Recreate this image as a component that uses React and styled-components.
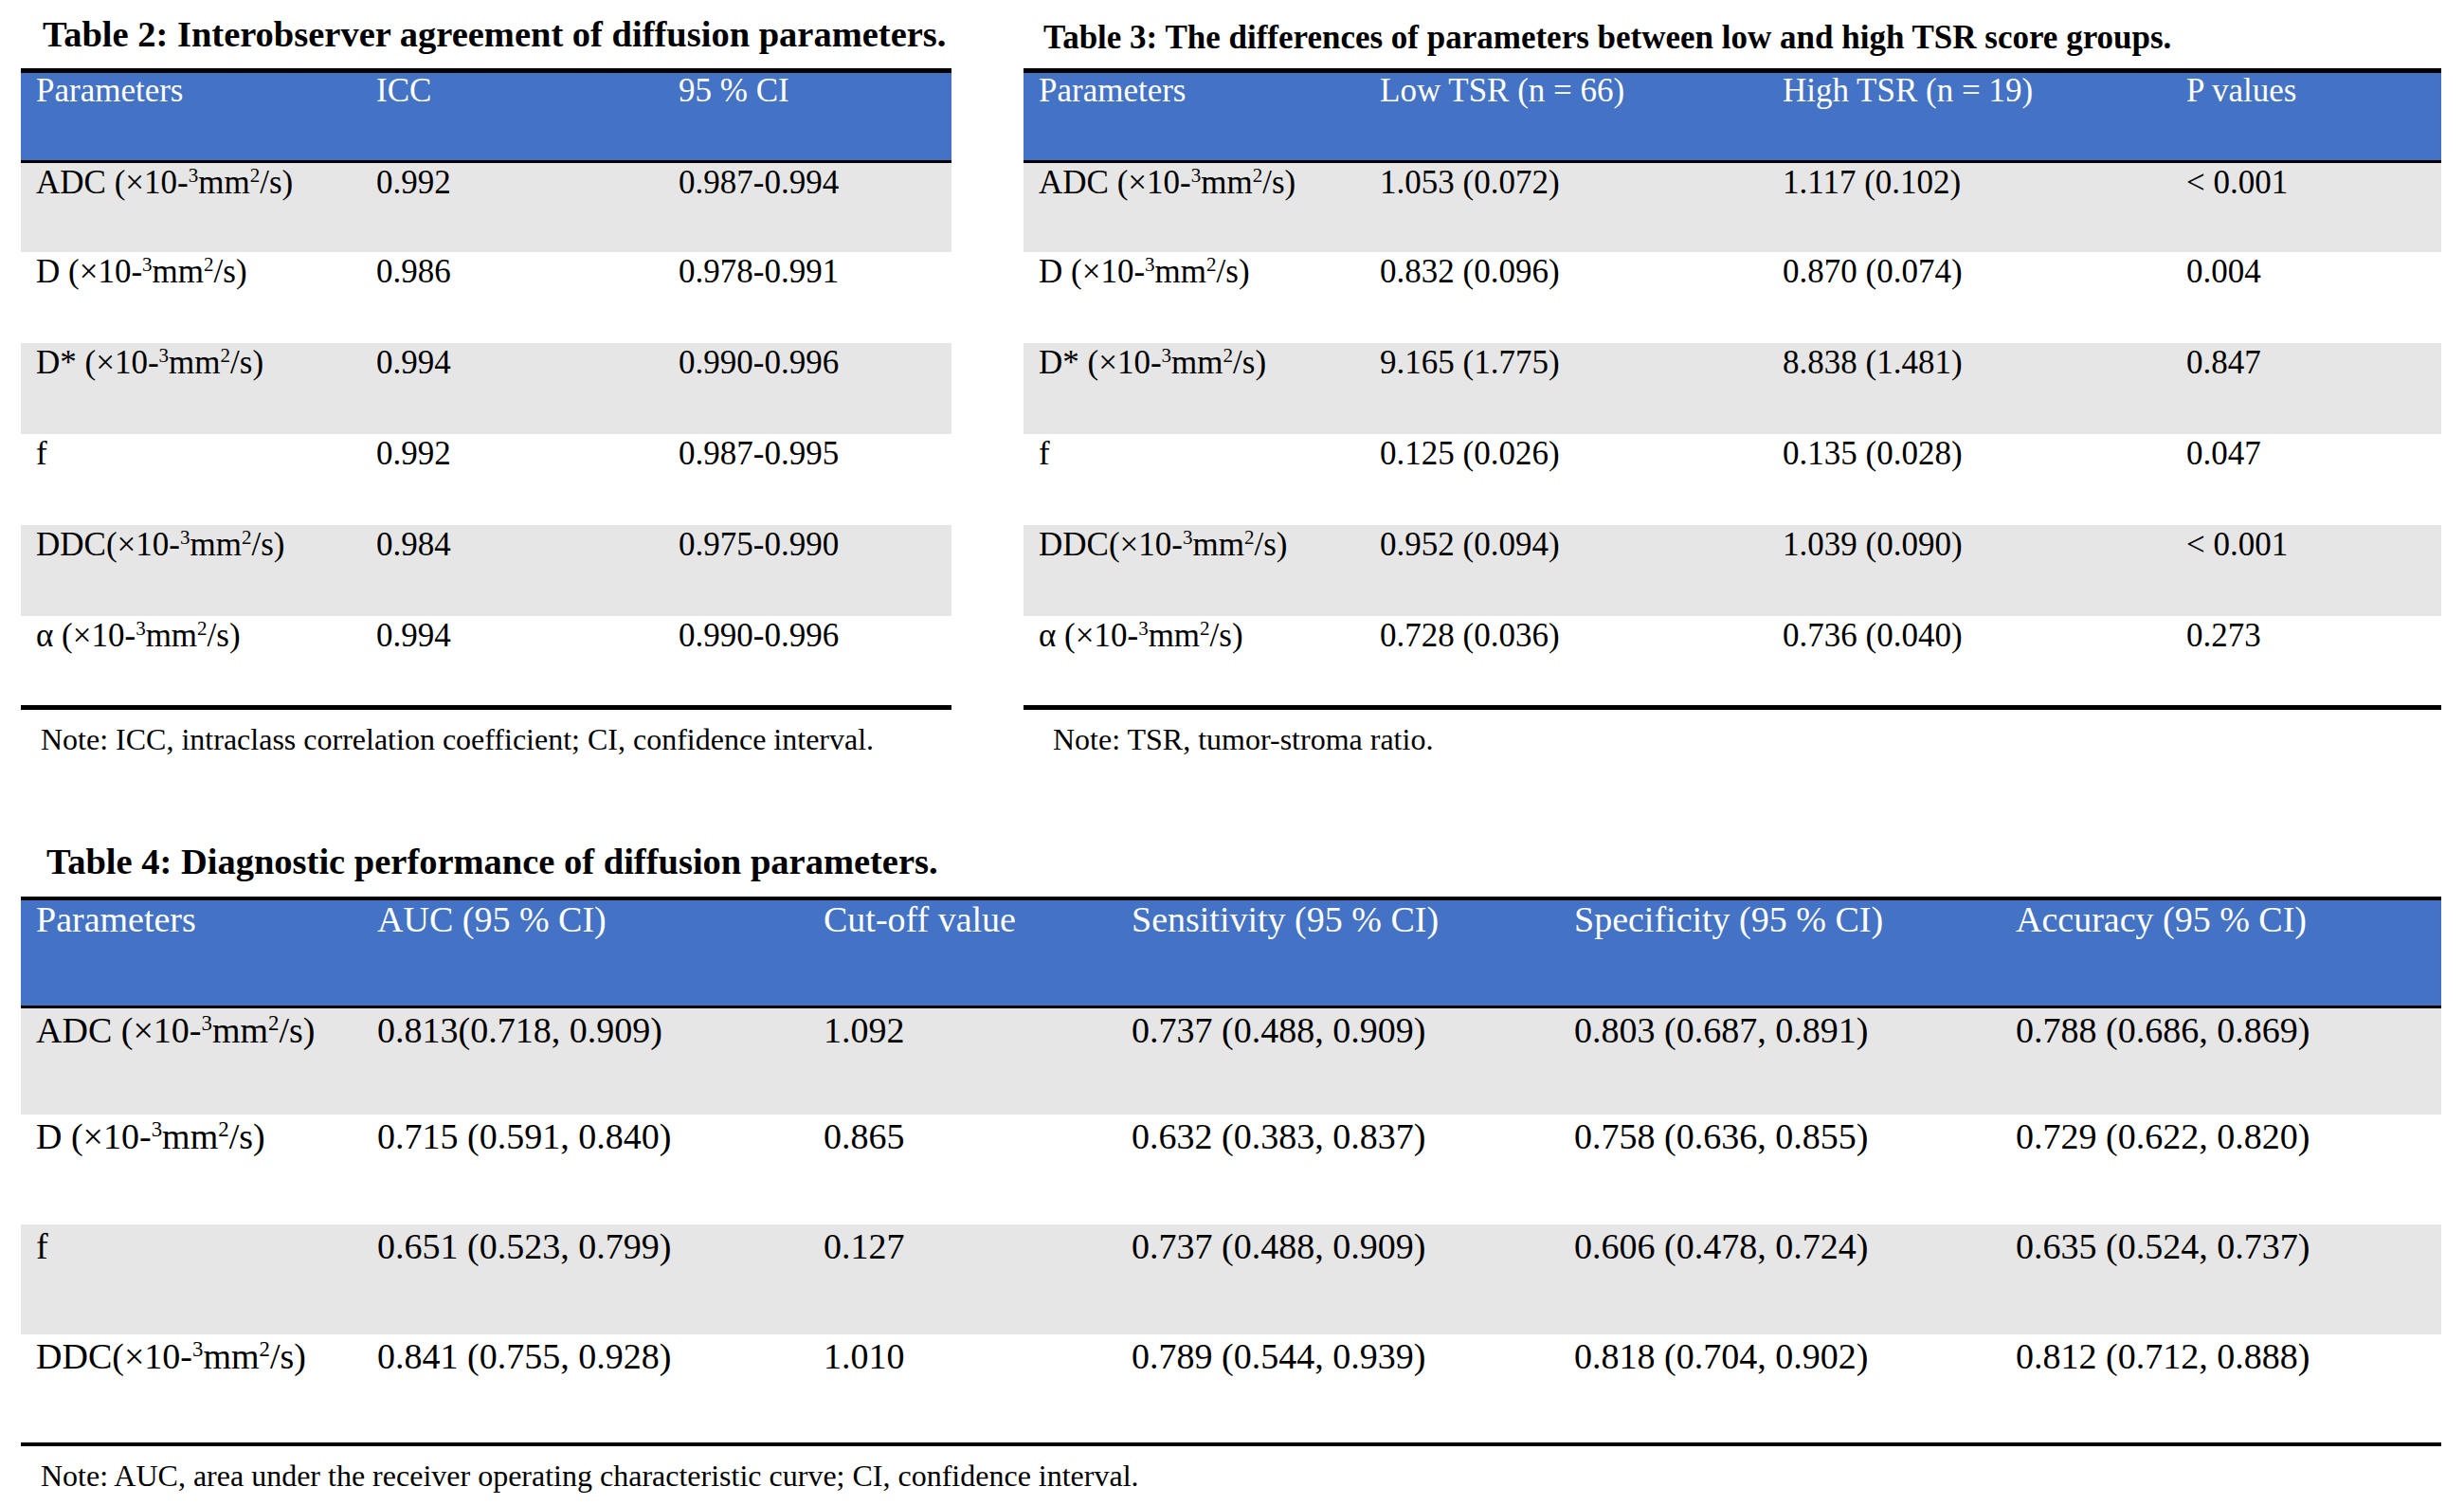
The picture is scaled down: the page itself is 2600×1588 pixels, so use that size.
import React from 'react';
import styled, { createGlobalStyle } from 'styled-components';

const GlobalStyle = createGlobalStyle`
  html, body {
    margin: 0;
    padding: 0;
    background: #ffffff;
  }
  body {
    font-family: "Liberation Serif", "Times New Roman", serif;
    color: #000000;
  }
`;

const Page = styled.div`
  width: 2600px;
  height: 1588px;
  padding: 0 0 0 22px;
  box-sizing: border-box;
  overflow: hidden;
`;

const TopRow = styled.div`
  display: flex;
  gap: 76px;
  align-items: flex-start;
`;

const Block = styled.section`
  width: ${({ $width }) => $width}px;
  margin-top: ${({ $top }) => $top || 0}px;
`;

const Caption = styled.h2`
  margin: 0 0 ${({ $gap }) => $gap}px;
  padding: ${({ $pad }) => $pad}px 0 0 ${({ $indent }) => $indent}px;
  font-size: ${({ $size }) => $size}px;
  line-height: 35px;
  font-weight: 700;
  white-space: nowrap;
`;

const Grid = styled.div`
  border-top: ${({ $rule }) => $rule}px solid #000;
  border-bottom: ${({ $rule }) => $rule}px solid #000;
`;

const Row = styled.div`
  display: grid;
  grid-template-columns: ${({ $cols }) => $cols};
  height: ${({ $h }) => $h}px;
  background: ${({ $head, $shade }) =>
    $head ? '#4472c4' : $shade ? '#e7e6e6' : '#ffffff'};
  color: ${({ $head }) => ($head ? '#ffffff' : '#000000')};
  border-bottom: ${({ $head }) => ($head ? '3px solid #000' : 'none')};
`;

const Cell = styled.div`
  padding: ${({ $pt }) => $pt}px 0 0 16px;
  font-size: ${({ $size }) => $size}px;
  line-height: 35px;
  white-space: nowrap;
`;

const Sup = styled.span`
  font-size: 0.6em;
  vertical-align: 0.55em;
  line-height: 0;
`;

const Note = styled.p`
  margin: 15px 0 0 ${({ $indent }) => $indent}px;
  font-size: 32px;
  line-height: 32px;
  white-space: nowrap;
`;

// "^3" in a label becomes a superscript digit
const Label = ({ text }) =>
  text.split(/\^(\d)/).map((part, i) =>
    i % 2 ? <Sup key={i}>{part}</Sup> : <React.Fragment key={i}>{part}</React.Fragment>
  );

const unit = '(×10-^3mm^2/s)';

const table2 = {
  caption: 'Table 2: Interobserver agreement of diffusion parameters.',
  captionSize: 38.5,
  width: 982,
  cols: '359px 319px 1fr',
  rule: 5,
  headHeight: 92,
  size: 35,
  headPad: 1,
  rowPad: 3,
  heights: [94, 96, 96, 96, 96, 94],
  head: ['Parameters', 'ICC', '95 % CI'],
  rows: [
    [`ADC ${unit}`, '0.992', '0.987-0.994'],
    [`D ${unit}`, '0.986', '0.978-0.991'],
    [`D* ${unit}`, '0.994', '0.990-0.996'],
    ['f', '0.992', '0.987-0.995'],
    [`DDC${unit}`, '0.984', '0.975-0.990'],
    [`α ${unit}`, '0.994', '0.990-0.996'],
  ],
  note: 'Note: ICC, intraclass correlation coefficient; CI, confidence interval.',
};

const table3 = {
  caption: 'Table 3: The differences of parameters between low and high TSR score groups.',
  captionSize: 35,
  width: 1496,
  cols: '360px 425px 426px 1fr',
  rule: 5,
  headHeight: 92,
  size: 35,
  headPad: 1,
  rowPad: 3,
  heights: [94, 96, 96, 96, 96, 94],
  head: ['Parameters', 'Low TSR (n = 66)', 'High TSR (n = 19)', 'P values'],
  rows: [
    [`ADC ${unit}`, '1.053 (0.072)', '1.117 (0.102)', '< 0.001'],
    [`D ${unit}`, '0.832 (0.096)', '0.870 (0.074)', '0.004'],
    [`D* ${unit}`, '9.165 (1.775)', '8.838 (1.481)', '0.847'],
    ['f', '0.125 (0.026)', '0.135 (0.028)', '0.047'],
    [`DDC${unit}`, '0.952 (0.094)', '1.039 (0.090)', '< 0.001'],
    [`α ${unit}`, '0.728 (0.036)', '0.736 (0.040)', '0.273'],
  ],
  note: 'Note: TSR, tumor-stroma ratio.',
};

const table4 = {
  caption: 'Table 4: Diagnostic performance of diffusion parameters.',
  captionSize: 38.5,
  width: 2554,
  cols: '360px 471px 325px 467px 466px 1fr',
  rule: 4,
  headHeight: 111,
  size: 38,
  headPad: 3,
  rowPad: 6,
  heights: [112, 116, 116, 114],
  head: [
    'Parameters',
    'AUC (95 % CI)',
    'Cut-off value',
    'Sensitivity (95 % CI)',
    'Specificity (95 % CI)',
    'Accuracy (95 % CI)',
  ],
  rows: [
    [`ADC ${unit}`, '0.813(0.718, 0.909)', '1.092', '0.737 (0.488, 0.909)', '0.803 (0.687, 0.891)', '0.788 (0.686, 0.869)'],
    [`D ${unit}`, '0.715 (0.591, 0.840)', '0.865', '0.632 (0.383, 0.837)', '0.758 (0.636, 0.855)', '0.729 (0.622, 0.820)'],
    ['f', '0.651 (0.523, 0.799)', '0.127', '0.737 (0.488, 0.909)', '0.606 (0.478, 0.724)', '0.635 (0.524, 0.737)'],
    [`DDC${unit}`, '0.841 (0.755, 0.928)', '1.010', '0.789 (0.544, 0.939)', '0.818 (0.704, 0.902)', '0.812 (0.712, 0.888)'],
  ],
  note: 'Note: AUC, area under the receiver operating characteristic curve; CI, confidence interval.',
};

const DataTable = ({ table, captionPad, captionGap, captionIndent, noteIndent, top }) => (
  <Block $width={table.width} $top={top}>
    <Caption $pad={captionPad} $gap={captionGap} $indent={captionIndent} $size={table.captionSize}>
      {table.caption}
    </Caption>
    <Grid $rule={table.rule}>
      <Row $head $cols={table.cols} $h={table.headHeight}>
        {table.head.map((h) => (
          <Cell key={h} $pt={table.headPad} $size={table.size}>
            {h}
          </Cell>
        ))}
      </Row>
      {table.rows.map((row, r) => (
        <Row key={r} $cols={table.cols} $h={table.heights[r]} $shade={r % 2 === 0}>
          {row.map((value, c) => (
            <Cell key={c} $pt={table.rowPad} $size={table.size}>
              <Label text={value} />
            </Cell>
          ))}
        </Row>
      ))}
    </Grid>
    <Note $indent={noteIndent}>{table.note}</Note>
  </Block>
);

const App = () => (
  <Page>
    <GlobalStyle />
    <TopRow>
      <DataTable table={table2} captionPad={19} captionGap={18} captionIndent={23} noteIndent={21} />
      <DataTable table={table3} captionPad={22} captionGap={15} captionIndent={21} noteIndent={31} />
    </TopRow>
    <DataTable table={table4} captionPad={0} captionGap={19} captionIndent={27} noteIndent={21} top={96} />
  </Page>
);

export default App;
